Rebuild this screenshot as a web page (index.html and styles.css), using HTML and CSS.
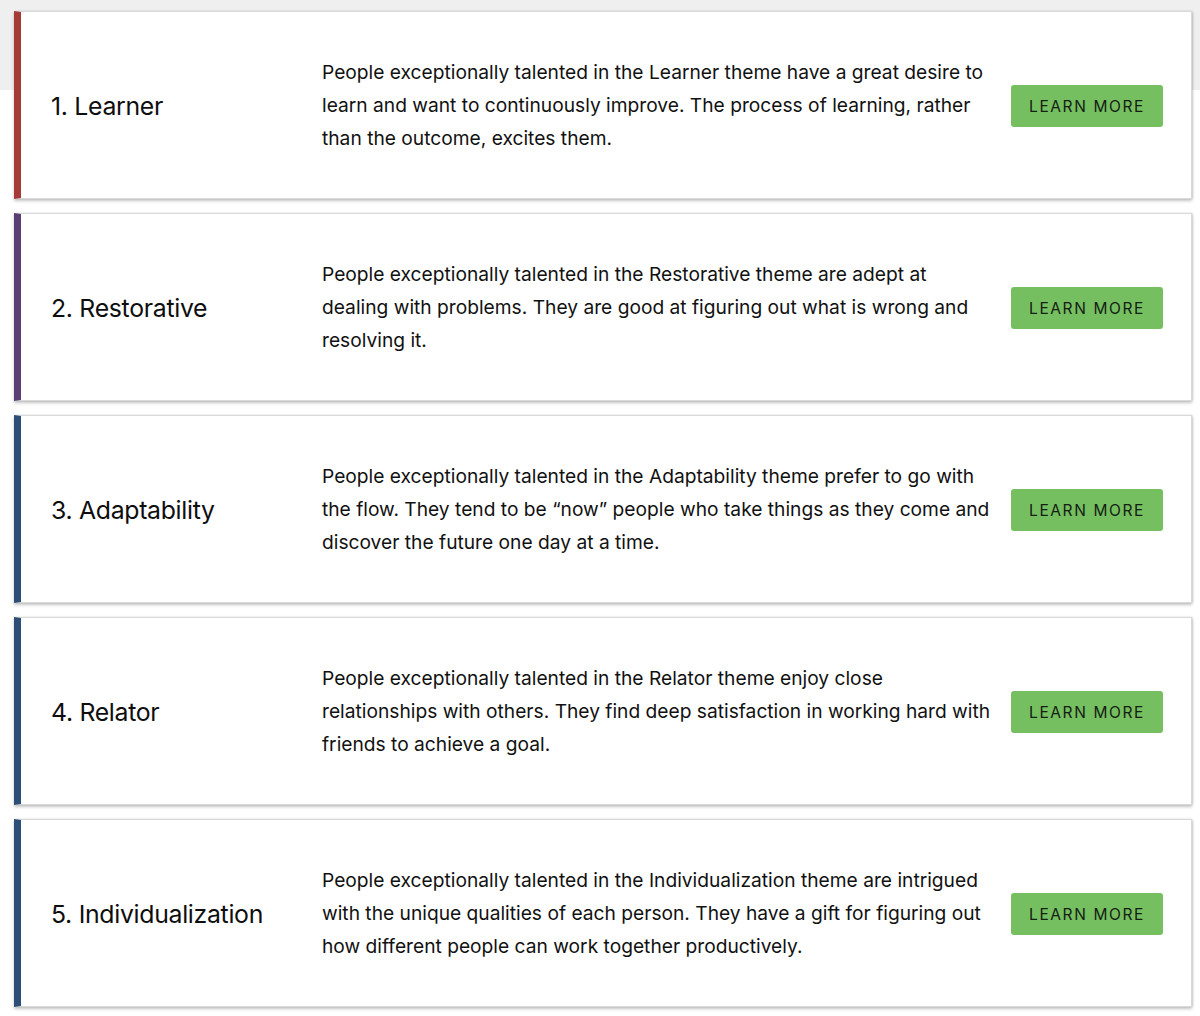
FILE: index.html
```html
<!DOCTYPE html>
<html lang="en">
<head>
<meta charset="utf-8">
<title>Top 5 Strengths</title>
<link rel="stylesheet" href="styles.css">
</head>
<body>
<main class="list">
  <section class="card accent-red">
    <h2 class="title">1. Learner</h2>
    <p class="desc">People exceptionally talented in the Learner theme have a great desire to learn and want to continuously improve. The process of learning, rather than the outcome, excites them.</p>
    <a class="btn" href="#">LEARN MORE</a>
  </section>
  <section class="card accent-purple">
    <h2 class="title">2. Restorative</h2>
    <p class="desc">People exceptionally talented in the Restorative theme are adept at dealing with problems. They are good at figuring out what is wrong and resolving it.</p>
    <a class="btn" href="#">LEARN MORE</a>
  </section>
  <section class="card accent-blue">
    <h2 class="title">3. Adaptability</h2>
    <p class="desc">People exceptionally talented in the Adaptability theme prefer to go with the flow. They tend to be “now” people who take things as they come and discover the future one day at a time.</p>
    <a class="btn" href="#">LEARN MORE</a>
  </section>
  <section class="card accent-blue">
    <h2 class="title">4. Relator</h2>
    <p class="desc">People exceptionally talented in the Relator theme enjoy close relationships with others. They find deep satisfaction in working hard with friends to achieve a goal.</p>
    <a class="btn" href="#">LEARN MORE</a>
  </section>
  <section class="card accent-blue">
    <h2 class="title">5. Individualization</h2>
    <p class="desc">People exceptionally talented in the Individualization theme are intrigued with the unique qualities of each person. They have a gift for figuring out how different people can work together productively.</p>
    <a class="btn" href="#">LEARN MORE</a>
  </section>
</main>
</body>
</html>
```

FILE: styles.css
```css
html, body {
  margin: 0;
  padding: 0;
}
body {
  background: linear-gradient(#efefef 0, #efefef 90px, #ffffff 90px);
  font-family: Inter, "Liberation Sans", Arial, sans-serif;
  color: #161616;
  min-height: 1016px;
}
.list {
  display: flex;
  flex-direction: column;
  gap: 14px;
  padding: 11px 8px 0 14px;
}
.card {
  box-sizing: border-box;
  min-height: 188px;
  display: grid;
  grid-template-columns: 251px 1fr 152px;
  column-gap: 20px;
  align-items: center;
  background: #fff;
  border: 1px solid #d9d9d9;
  border-left: 7px solid #a63a37;
  padding: 1px 28px 0 30px;
  box-shadow: 0 2px 3px rgba(0, 0, 0, 0.22), 1px 0 2px rgba(0, 0, 0, 0.12);
}
.accent-red { border-left-color: #a63a37; }
.accent-purple { border-left-color: #5b3f74; }
.accent-blue { border-left-color: #2d4f76; }
.title {
  margin: 0;
  font-size: 24.8px;
  font-weight: 400;
  color: #0e0e0e;
  letter-spacing: -0.3px;
}
.desc {
  margin: 0;
  font-size: 19.2px;
  line-height: 33px;
  color: #111;
}
.btn {
  display: flex;
  align-items: center;
  justify-content: center;
  height: 42px;
  margin-top: 1px;
  background: #76bf60;
  border-radius: 3px;
  color: #142014;
  text-decoration: none;
  font-size: 15.5px;
  letter-spacing: 1.6px;
}
```
